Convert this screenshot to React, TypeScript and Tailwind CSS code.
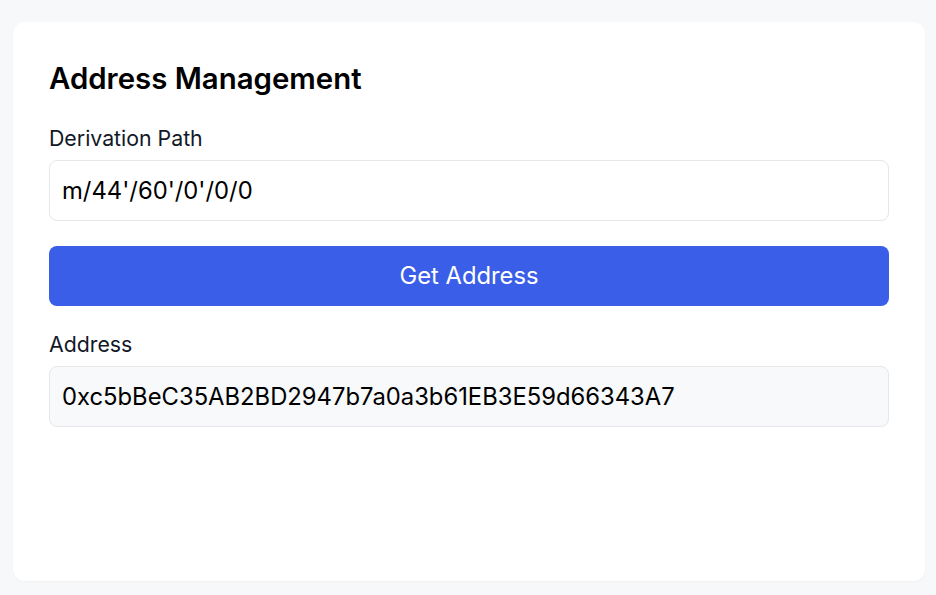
import React from "react";

export default function App() {
  return (
    <div
      className="min-h-[595px] w-full bg-[#f7f8fa] pt-[22px] pb-[14px] pl-[13px] pr-[11px]"
      style={{ fontFamily: "Inter, 'Noto Sans', sans-serif" }}
    >
      <div className="h-[559px] rounded-xl bg-white px-[36px] pt-[39px] shadow-[0_1px_2px_rgba(0,0,0,0.03)]">
        <h1 className="text-[29.4px] font-semibold leading-[36px] text-black">Address Management</h1>
        <div className="mt-[27px] flex flex-col">
          <label className="text-[21.3px] font-normal leading-[28px] text-[#111827]">Derivation Path</label>
          <div className="mt-[8px] flex h-[61px] items-center rounded-lg border border-[#e5e7eb] bg-white px-[12px] text-[23.8px] text-black">
            m/44'/60'/0'/0/0
          </div>
          <button className="mt-[25px] flex h-[60px] items-center justify-center rounded-lg bg-[#3a5ee8] text-[23.8px] text-white">
            Get Address
          </button>
          <label className="mt-[24px] text-[21.3px] font-normal leading-[28px] text-[#111827]">Address</label>
          <div className="mt-[8px] flex h-[61px] items-center rounded-lg border border-[#e5e7eb] bg-[#f8f9fb] px-[12px] text-[23.8px] text-black">
            0xc5bBeC35AB2BD2947b7a0a3b61EB3E59d66343A7
          </div>
        </div>
      </div>
    </div>
  );
}
